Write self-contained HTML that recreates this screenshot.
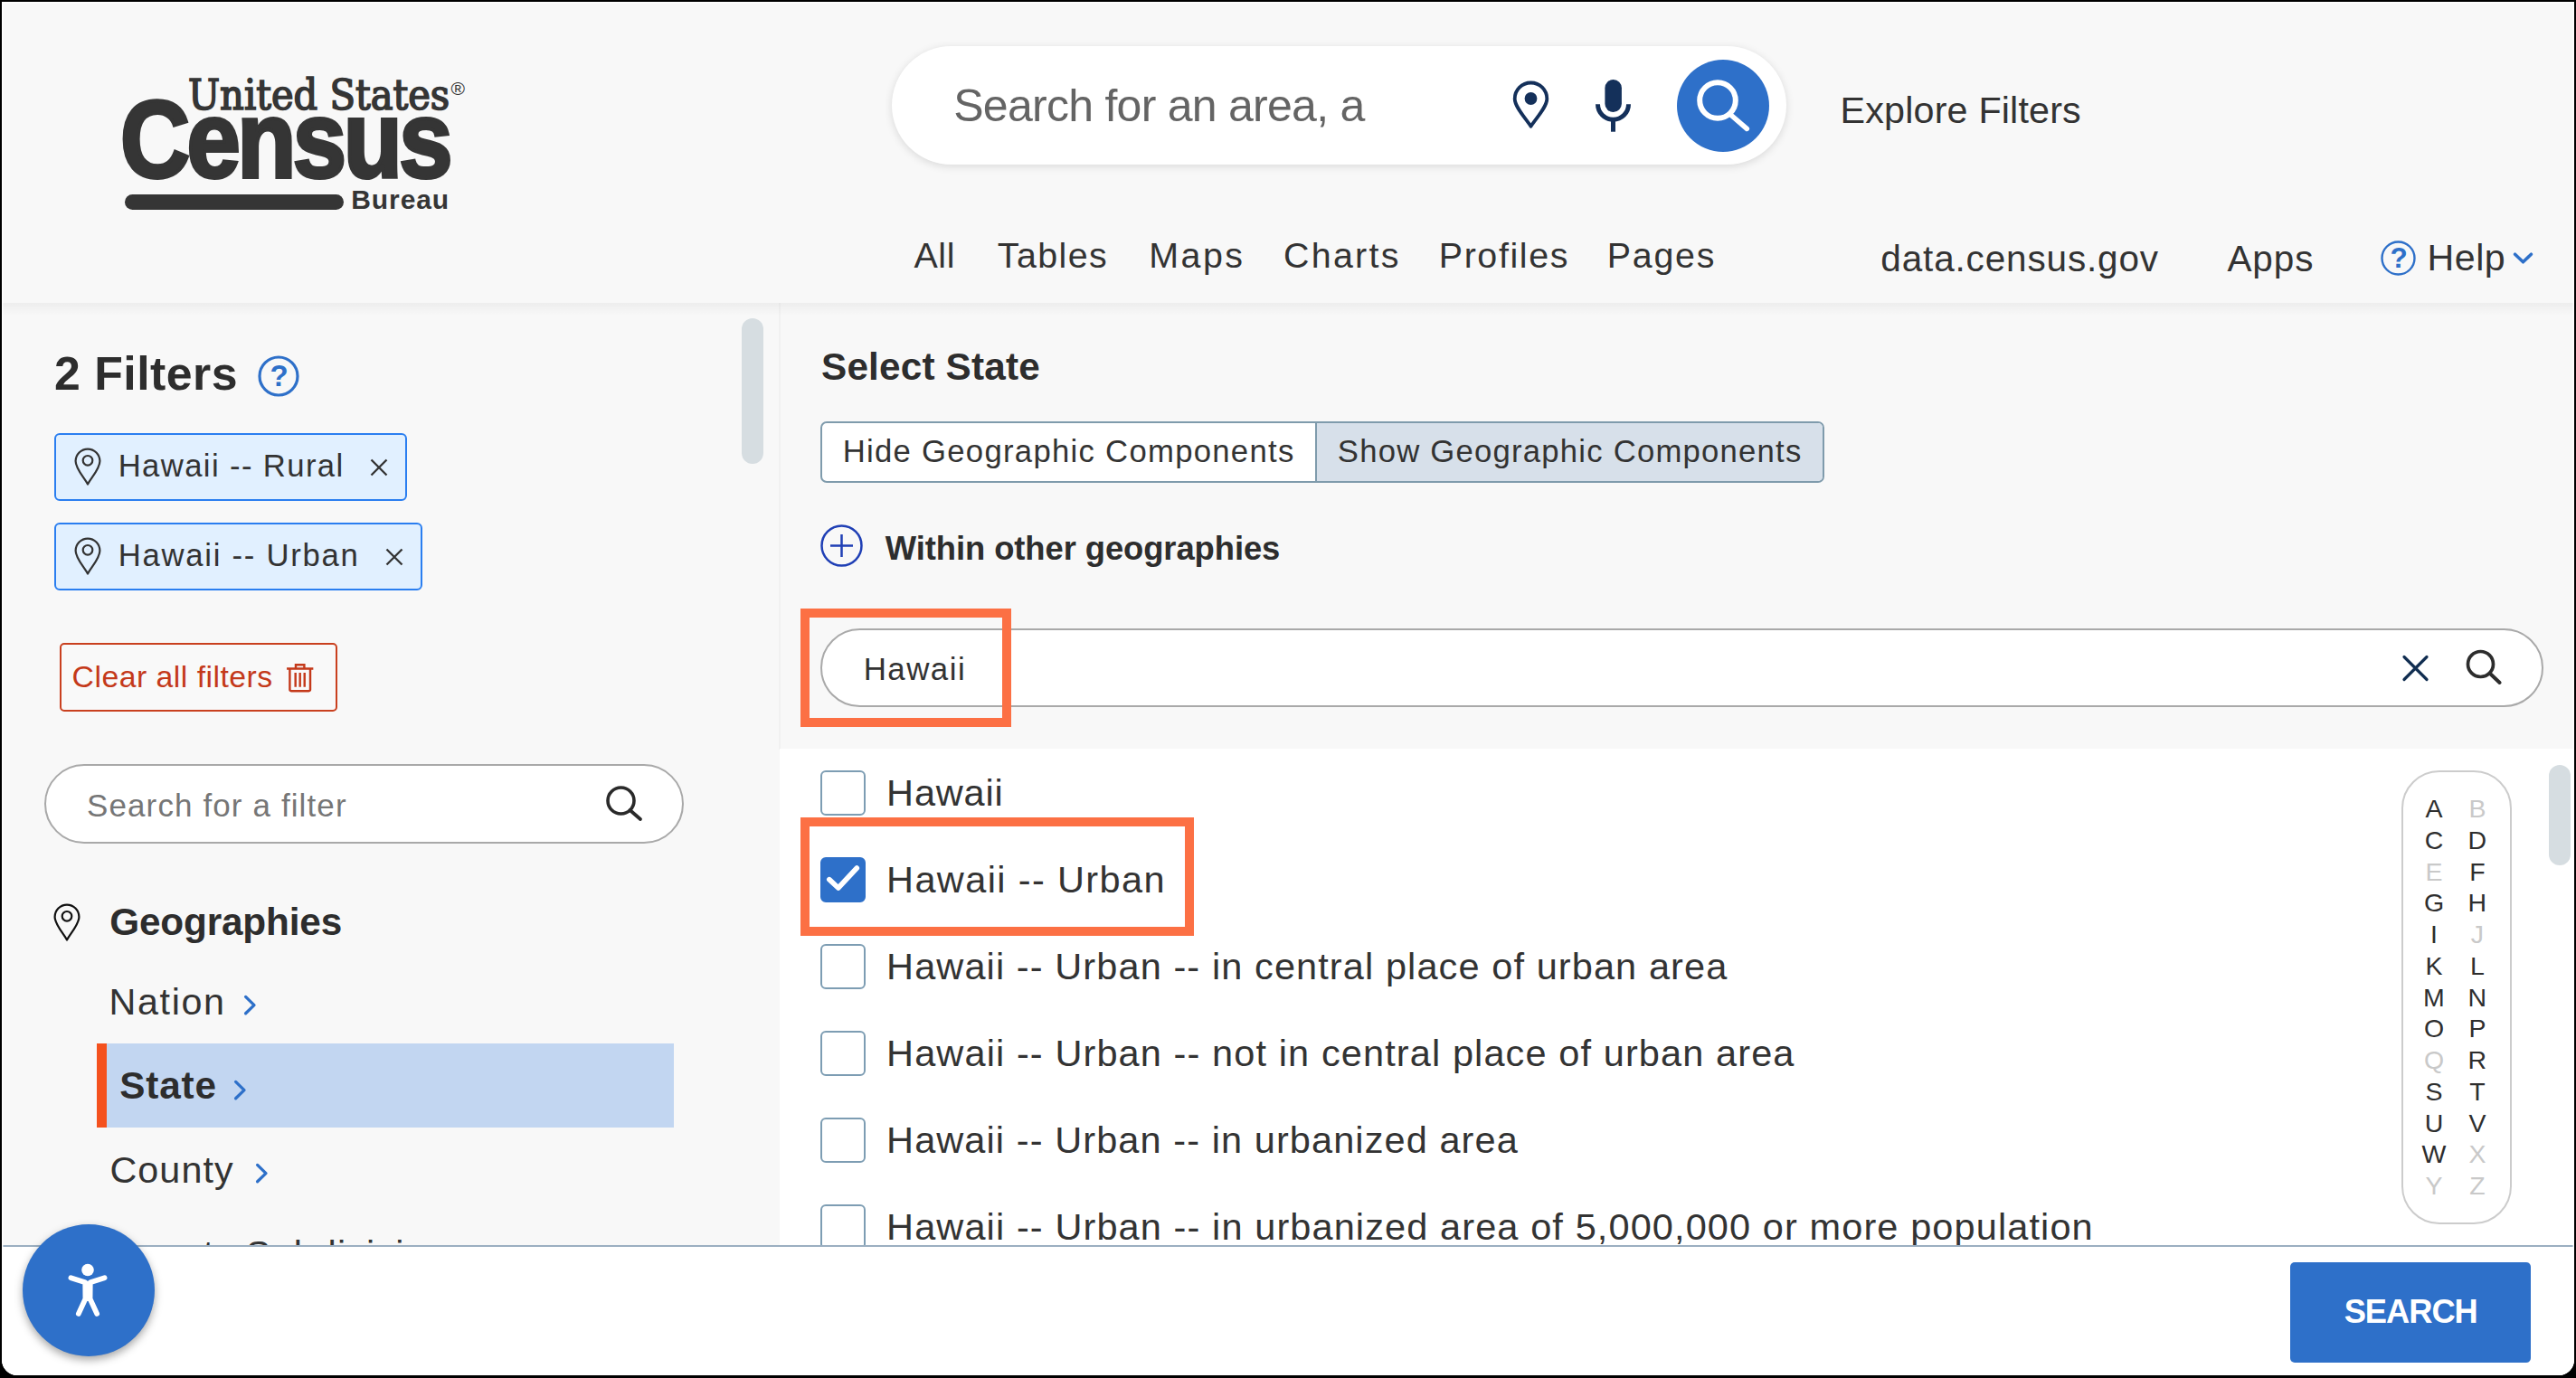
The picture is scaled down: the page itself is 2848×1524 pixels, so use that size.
<!DOCTYPE html>
<html lang="en">
<head>
<meta charset="utf-8">
<title>Explore Census Data - Select State</title>
<style>
*{box-sizing:border-box;margin:0;padding:0}
html,body{width:2848px;height:1524px;overflow:hidden;background:#000}
body{font-family:"Liberation Sans",sans-serif;color:#333;position:relative}
#win{position:absolute;left:2px;top:2px;width:2844px;height:1519px;overflow:hidden;border-radius:0 0 17px 17px;background:#f8f8f8}
#c{position:absolute;left:-2px;top:-2px;width:2848px;height:1524px}
.a{position:absolute;display:block}
.t{position:absolute;display:block;white-space:nowrap}
svg{position:absolute;display:block;overflow:visible}
.cb{position:absolute;width:49.5px;height:49.8px;border:2px solid #7d9db3;border-radius:6px;background:#fff}
.az span{position:absolute;display:block;width:40px;text-align:center;font-size:28.5px;line-height:30px;color:#2e2e2e}
.az span.d{color:#c9c9c9}
</style>
</head>
<body>
<div id="win">
<div id="c">
<!-- page regions -->
<div class="a" style="left:0;top:0;width:2848px;height:335px;background:#f8f8f8"></div>
<div class="a" style="left:0;top:335px;width:861px;height:1045px;background:#f8f8f8"></div>
<div class="a" style="left:861px;top:335px;width:1987px;height:494px;background:#f8f8f8;border-left:2px solid #f1f1f1"></div>
<div class="a" style="left:862px;top:828px;width:1986px;height:552px;background:#fff"></div>
<div class="a" style="left:0;top:335px;width:2848px;height:14px;background:linear-gradient(rgba(0,0,0,.045),rgba(0,0,0,0))"></div>
<!-- logo -->
<header>
<span class="t" id="lg-us" style="left:208px;top:75.3px;font-family:'DejaVu Serif Condensed','DejaVu Serif','Liberation Serif',serif;font-size:46.5px;line-height:60px;color:#353535;transform-origin:0 0;transform:scaleX(.995);-webkit-text-stroke:1.6px #353535">United States</span>
<span class="t" id="lg-r" style="left:498.5px;top:84.5px;font-size:21px;line-height:26px;color:#353535">®</span>
<span class="t" id="lg-c" style="left:133px;top:83.5px;font-weight:700;font-size:120px;line-height:140px;color:#353535;transform-origin:0 0;transform:scaleX(.889);-webkit-text-stroke:4px #353535;letter-spacing:-4px">Census</span>
<div class="a" style="left:137.5px;top:215px;width:242px;height:17.4px;border-radius:9px;background:#353535"></div>
<span class="t" id="lg-b" style="left:388.3px;top:204px;font-weight:700;font-size:30px;line-height:34px;color:#353535;letter-spacing:.9px">Bureau</span>
<!-- main search -->
<div class="a" style="left:986px;top:51px;width:989px;height:131px;border-radius:66px;background:#fff;box-shadow:0 2px 10px rgba(0,0,0,.13)"></div>
<span class="t" style="left:1054.25px;top:91.58px;font-size:50.00px;line-height:50.00px;letter-spacing:-0.735px;color:#646464;">Search for an area, a</span>
<svg style="left:1668px;top:86px" width="50" height="60" viewBox="0 0 50 60"><path d="M24.5 53.8 C19 45 6.7 32.5 6.7 23.3 A17.8 17.8 0 0 1 42.3 23.3 C42.3 32.5 30 45 24.5 53.8 Z" fill="none" stroke="#14305a" stroke-width="3.8" stroke-linejoin="round"/><circle cx="24.5" cy="23" r="6.9" fill="#14305a"/></svg>
<svg style="left:1760px;top:84px" width="50" height="66" viewBox="0 0 50 66"><rect x="14.4" y="4" width="18.5" height="36" rx="9.25" fill="#14305a"/><path d="M6.5 31.3 A17 17 0 0 0 40.5 31.3" fill="none" stroke="#14305a" stroke-width="5"/><rect x="21" y="48" width="5" height="13.7" fill="#14305a"/></svg>
<div class="a" style="left:1854px;top:66px;width:102px;height:102px;border-radius:51px;background:#2e70c9"></div>
<svg style="left:1854px;top:66px" width="102" height="102" viewBox="0 0 102 102"><circle cx="45" cy="45" r="19.8" fill="none" stroke="#fff" stroke-width="6"/><path d="M59.5 61 L77.3 76.4" stroke="#fff" stroke-width="5.6" stroke-linecap="round"/></svg>
<span class="t" style="left:2034.61px;top:101.64px;font-size:41.30px;line-height:41.30px;letter-spacing:0.159px;color:#333;">Explore Filters</span>
<nav>
<span class="t" style="left:1010.52px;top:263.25px;font-size:39.40px;line-height:39.40px;letter-spacing:0.553px;color:#333;">All</span>
<span class="t" style="left:1102.83px;top:263.25px;font-size:39.40px;line-height:39.40px;letter-spacing:1.416px;color:#333;">Tables</span>
<span class="t" style="left:1270.37px;top:263.25px;font-size:39.40px;line-height:39.40px;letter-spacing:2.439px;color:#333;">Maps</span>
<span class="t" style="left:1419.03px;top:263.25px;font-size:39.40px;line-height:39.40px;letter-spacing:2.271px;color:#333;">Charts</span>
<span class="t" style="left:1590.77px;top:263.25px;font-size:39.40px;line-height:39.40px;letter-spacing:1.607px;color:#333;">Profiles</span>
<span class="t" style="left:1776.77px;top:263.25px;font-size:39.40px;line-height:39.40px;letter-spacing:1.738px;color:#333;">Pages</span>
<span class="t" style="left:2079.30px;top:265.72px;font-size:40.50px;line-height:40.50px;letter-spacing:0.847px;color:#333;">data.census.gov</span>
<span class="t" style="left:2462.42px;top:265.72px;font-size:40.50px;line-height:40.50px;letter-spacing:0.913px;color:#333;">Apps</span>
<svg style="left:2631px;top:265px" width="42" height="42" viewBox="0 0 42 42"><circle cx="20.5" cy="20.5" r="18" fill="none" stroke="#2e70c9" stroke-width="2.4"/></svg>
<span class="t" style="left:2642.58px;top:270.14px;font-size:31.50px;line-height:31.50px;letter-spacing:0.000px;color:#2e70c9;font-weight:700;">?</span>
<span class="t" style="left:2683.62px;top:265.12px;font-size:41.20px;line-height:41.20px;letter-spacing:0.440px;color:#333;">Help</span>
<svg style="left:2777px;top:276.6px" width="26" height="18" viewBox="0 0 26 18"><path d="M3.6 4.2 L12.5 12.8 L21.4 4.2" fill="none" stroke="#2e70c9" stroke-width="3.5" stroke-linecap="round" stroke-linejoin="round"/></svg>
</nav>
</header>
<!-- filter sidebar -->
<aside>
<span class="t" style="left:59.94px;top:388.25px;font-size:51.80px;line-height:51.80px;letter-spacing:0.498px;color:#2d2d2d;font-weight:700;">2 Filters</span>
<svg style="left:283px;top:392px" width="50" height="50" viewBox="0 0 50 50"><circle cx="25" cy="24" r="21" fill="none" stroke="#2e70c9" stroke-width="3.2"/></svg>
<span class="t" style="left:298.51px;top:399.37px;font-size:33.00px;line-height:33.00px;letter-spacing:0.000px;color:#2e70c9;font-weight:700;">?</span>
<div class="a" style="left:820px;top:352px;width:24px;height:161px;border-radius:12px;background:#d6dde1"></div>
<div class="a" style="left:60px;top:479px;width:390px;height:74.5px;border:2px solid #2a7ef0;border-radius:6px;background:#e1f0ff"></div>
<svg style="left:82px;top:495px" width="30" height="42" viewBox="0 0 30 42"><path d="M15 40.5 C11 33 1.6 23.5 1.6 15 A13.4 13.4 0 0 1 28.4 15 C28.4 23.5 19 33 15 40.5 Z" fill="none" stroke="#333" stroke-width="2.2" stroke-linejoin="round"/><circle cx="15" cy="14.3" r="5.3" fill="none" stroke="#333" stroke-width="2.2"/></svg>
<span class="t" style="left:130.65px;top:498.43px;font-size:34.70px;line-height:34.70px;letter-spacing:1.371px;color:#333;">Hawaii -- Rural</span>
<svg style="left:409px;top:507px" width="20" height="20" viewBox="0 0 20 20"><path d="M1.5 1.5 L18.5 18.5 M18.5 1.5 L1.5 18.5" stroke="#333" stroke-width="2.3" fill="none"/></svg>
<div class="a" style="left:60px;top:578px;width:406.5px;height:74.5px;border:2px solid #2a7ef0;border-radius:6px;background:#e1f0ff"></div>
<svg style="left:82px;top:594px" width="30" height="42" viewBox="0 0 30 42"><path d="M15 40.5 C11 33 1.6 23.5 1.6 15 A13.4 13.4 0 0 1 28.4 15 C28.4 23.5 19 33 15 40.5 Z" fill="none" stroke="#333" stroke-width="2.2" stroke-linejoin="round"/><circle cx="15" cy="14.3" r="5.3" fill="none" stroke="#333" stroke-width="2.2"/></svg>
<span class="t" style="left:130.65px;top:597.23px;font-size:34.70px;line-height:34.70px;letter-spacing:1.731px;color:#333;">Hawaii -- Urban</span>
<svg style="left:426px;top:606px" width="20" height="20" viewBox="0 0 20 20"><path d="M1.5 1.5 L18.5 18.5 M18.5 1.5 L1.5 18.5" stroke="#333" stroke-width="2.3" fill="none"/></svg>
<div class="a" style="left:66px;top:711px;width:307px;height:76px;border:2px solid #c9401f;border-radius:5px;background:#f9f9f9"></div>
<span class="t" style="left:79.61px;top:732.39px;font-size:33.80px;line-height:33.80px;letter-spacing:0.468px;color:#c4391a;">Clear all filters</span>
<svg style="left:315.6px;top:733px" width="31.4" height="33.5" viewBox="0 0 30 32"><path d="M1 6.2 H29 M10.5 5.5 V2.2 H19.5 V5.5 M4.2 6.5 V28.3 Q4.2 29.8 5.7 29.8 H24.3 Q25.8 29.8 25.8 28.3 V6.5 M10.2 10.5 V25.5 M15 10.5 V25.5 M19.8 10.5 V25.5" fill="none" stroke="#c4391a" stroke-width="2.3"/></svg>
<div class="a" style="left:48.7px;top:845px;width:707px;height:88px;border:2px solid #a9a9a9;border-radius:44px;background:#fff"></div>
<span class="t" style="left:96.03px;top:873.70px;font-size:34.97px;line-height:34.97px;letter-spacing:1.128px;color:#767676;">Search for a filter</span>
<svg style="left:668px;top:866.7px" width="46" height="44" viewBox="0 0 46 44"><circle cx="18.5" cy="18.5" r="14.5" fill="none" stroke="#2a2a2a" stroke-width="3.6"/><path d="M28.5 29 L40 39" stroke="#2a2a2a" stroke-width="3.8" stroke-linecap="round"/></svg>
<svg style="left:59px;top:999px" width="30" height="42" viewBox="0 0 30 42"><path d="M15 40.5 C11 33 1.6 23.5 1.6 15 A13.4 13.4 0 0 1 28.4 15 C28.4 23.5 19 33 15 40.5 Z" fill="none" stroke="#111" stroke-width="2.2" stroke-linejoin="round"/><circle cx="15" cy="14.3" r="5.3" fill="none" stroke="#111" stroke-width="2.2"/></svg>
<span class="t" style="left:121.27px;top:999.39px;font-size:42.30px;line-height:42.30px;letter-spacing:-0.165px;color:#2d2d2d;font-weight:700;">Geographies</span>
<span class="t" style="left:120.61px;top:1088.44px;font-size:41.30px;line-height:41.30px;letter-spacing:1.595px;color:#333;">Nation</span>
<svg style="left:269px;top:1100px" width="16" height="23" viewBox="0 0 16 23"><path d="M2.6 2.4 L12 11.6 L2.6 20.8" fill="none" stroke="#2e70c9" stroke-width="3.3" stroke-linecap="round" stroke-linejoin="round"/></svg>
<div class="a" style="left:107px;top:1154px;width:638px;height:93px;background:#c2d6f1;border-left:11px solid #f4511e"></div>
<span class="t" style="left:132.32px;top:1180.19px;font-size:42.30px;line-height:42.30px;letter-spacing:0.800px;color:#2d2d2d;font-weight:700;">State</span>
<svg style="left:258px;top:1194px" width="16" height="23" viewBox="0 0 16 23"><path d="M2.6 2.4 L12 11.6 L2.6 20.8" fill="none" stroke="#2e70c9" stroke-width="3.3" stroke-linecap="round" stroke-linejoin="round"/></svg>
<span class="t" style="left:121.44px;top:1273.64px;font-size:41.30px;line-height:41.30px;letter-spacing:1.062px;color:#333;">County</span>
<svg style="left:282px;top:1286px" width="16" height="23" viewBox="0 0 16 23"><path d="M2.6 2.4 L12 11.6 L2.6 20.8" fill="none" stroke="#2e70c9" stroke-width="3.3" stroke-linecap="round" stroke-linejoin="round"/></svg>
<span class="t" style="left:121.44px;top:1366.54px;font-size:41.30px;line-height:41.30px;letter-spacing:1.158px;color:#333;">County Subdivision</span>
</aside>
<!-- select state panel -->
<main>
<span class="t" style="left:908.02px;top:384.89px;font-size:42.30px;line-height:42.30px;letter-spacing:0.175px;color:#2d2d2d;font-weight:700;">Select State</span>
<div class="a" style="left:907px;top:465.7px;width:1110px;height:68px;border:2px solid #7f9bac;border-radius:7px;background:#fff;overflow:hidden"><div class="a" style="left:545px;top:-2px;width:563px;height:67px;background:#d7e0ea;border-left:2px solid #7f9bac"></div></div>
<span class="t" style="left:931.65px;top:482.13px;font-size:34.70px;line-height:34.70px;letter-spacing:1.280px;color:#333;">Hide Geographic Components</span>
<span class="t" style="left:1478.84px;top:482.13px;font-size:34.70px;line-height:34.70px;letter-spacing:1.215px;color:#333;">Show Geographic Components</span>
<svg style="left:906px;top:579px" width="50" height="50" viewBox="0 0 50 50"><circle cx="24.5" cy="24.5" r="22" fill="none" stroke="#1f3fb5" stroke-width="2.5"/><path d="M24.5 12 V37 M12 24.5 H37" stroke="#1f3fb5" stroke-width="2.5"/></svg>
<span class="t" style="left:978.76px;top:588.59px;font-size:36.40px;line-height:36.40px;letter-spacing:-0.079px;color:#2d2d2d;font-weight:700;">Within other geographies</span>
<div class="a" style="left:907px;top:695px;width:1904.5px;height:86.5px;border:2px solid #a9a9a9;border-radius:44px;background:#fff"></div>
<span class="t" style="left:954.64px;top:723.26px;font-size:34.90px;line-height:34.90px;letter-spacing:1.473px;color:#333;">Hawaii</span>
<svg style="left:2656px;top:725px" width="30" height="28" viewBox="0 0 30 28"><path d="M2 1.5 L27 26.5 M27 1.5 L2 26.5" stroke="#112e51" stroke-width="3.2" fill="none" stroke-linecap="round"/></svg>
<svg style="left:2725px;top:717px" width="44" height="44" viewBox="0 0 44 44"><circle cx="17.5" cy="17.5" r="14" fill="none" stroke="#2d2d2d" stroke-width="3.7"/><path d="M27.8 27.8 L38.6 38" stroke="#2d2d2d" stroke-width="4" stroke-linecap="round"/></svg>
<div class="a" style="left:885px;top:672.5px;width:233px;height:131px;border:10px solid #fc7044"></div>
<div class="cb" style="left:907.3px;top:852.4px"></div>
<span class="t" style="left:980.10px;top:856.17px;font-size:41.50px;line-height:41.50px;letter-spacing:0.828px;color:#333;">Hawaii</span>
<div class="cb" style="left:907.3px;top:948.4px;background:#2e70c9;border-color:#2e70c9"></div>
<svg style="left:907.3px;top:948.4px" width="50" height="49" viewBox="0 0 50 49"><path d="M9.8 24.6 L19.8 34 L40.3 12" fill="none" stroke="#fff" stroke-width="5.6" stroke-linecap="round" stroke-linejoin="round"/></svg>
<span class="t" style="left:980.10px;top:952.17px;font-size:41.50px;line-height:41.50px;letter-spacing:1.364px;color:#333;">Hawaii -- Urban</span>
<div class="cb" style="left:907.3px;top:1044.4px"></div>
<span class="t" style="left:980.10px;top:1048.17px;font-size:41.50px;line-height:41.50px;letter-spacing:1.097px;color:#333;">Hawaii -- Urban -- in central place of urban area</span>
<div class="cb" style="left:907.3px;top:1140.4px"></div>
<span class="t" style="left:980.10px;top:1144.17px;font-size:41.50px;line-height:41.50px;letter-spacing:1.108px;color:#333;">Hawaii -- Urban -- not in central place of urban area</span>
<div class="cb" style="left:907.3px;top:1236.4px"></div>
<span class="t" style="left:980.10px;top:1240.17px;font-size:41.50px;line-height:41.50px;letter-spacing:1.086px;color:#333;">Hawaii -- Urban -- in urbanized area</span>
<div class="cb" style="left:907.3px;top:1332.4px"></div>
<span class="t" style="left:980.10px;top:1336.17px;font-size:41.50px;line-height:41.50px;letter-spacing:1.105px;color:#333;">Hawaii -- Urban -- in urbanized area of 5,000,000 or more population</span>
<div class="a" style="left:885px;top:904px;width:435px;height:130.5px;border:10px solid #fc7044"></div>
<div class="a az" style="left:2654.8px;top:852px;width:122.2px;height:502px;border:2px solid #ccc;border-radius:42px;background:#fff">
<span class="" style="left:14.2px;top:25.1px">A</span>
<span class="d" style="left:62.1px;top:25.1px">B</span>
<span class="" style="left:14.2px;top:59.9px">C</span>
<span class="" style="left:62.1px;top:59.9px">D</span>
<span class="d" style="left:14.2px;top:94.6px">E</span>
<span class="" style="left:62.1px;top:94.6px">F</span>
<span class="" style="left:14.2px;top:129.4px">G</span>
<span class="" style="left:62.1px;top:129.4px">H</span>
<span class="" style="left:14.2px;top:164.1px">I</span>
<span class="d" style="left:62.1px;top:164.1px">J</span>
<span class="" style="left:14.2px;top:198.9px">K</span>
<span class="" style="left:62.1px;top:198.9px">L</span>
<span class="" style="left:14.2px;top:233.6px">M</span>
<span class="" style="left:62.1px;top:233.6px">N</span>
<span class="" style="left:14.2px;top:268.4px">O</span>
<span class="" style="left:62.1px;top:268.4px">P</span>
<span class="d" style="left:14.2px;top:303.1px">Q</span>
<span class="" style="left:62.1px;top:303.1px">R</span>
<span class="" style="left:14.2px;top:337.9px">S</span>
<span class="" style="left:62.1px;top:337.9px">T</span>
<span class="" style="left:14.2px;top:372.6px">U</span>
<span class="" style="left:62.1px;top:372.6px">V</span>
<span class="" style="left:14.2px;top:407.4px">W</span>
<span class="d" style="left:62.1px;top:407.4px">X</span>
<span class="d" style="left:14.2px;top:442.1px">Y</span>
<span class="d" style="left:62.1px;top:442.1px">Z</span>
</div>
<div class="a" style="left:2818px;top:846px;width:24px;height:111px;border-radius:12px;background:#d6dde1"></div>
</main>
<!-- footer bar -->
<footer>
<div class="a" style="left:0;top:1377px;width:2848px;height:147px;background:#fff;border-top:2px solid #9bafc1"></div>
<div class="a" style="left:2532px;top:1396px;width:266px;height:111px;border-radius:5px;background:#2e70c9"></div>
<span class="t" style="left:2591.68px;top:1432.87px;font-size:36.30px;line-height:36.30px;letter-spacing:-1.029px;color:#fff;font-weight:700;">SEARCH</span>
<div class="a" style="left:25px;top:1354px;width:146px;height:146px;border-radius:73px;background:#2e70c9;box-shadow:0 4px 10px rgba(0,0,0,.35)"></div>
<svg style="left:25px;top:1354px" width="146" height="146" viewBox="0 0 146 146"><circle cx="72" cy="50.5" r="6.8" fill="#fff"/><path d="M53.4 59.2 L69.2 64.2 L69.4 82.5 L61.8 99 M90.6 59.2 L74.8 64.2 L74.6 82.5 L82.2 99" fill="none" stroke="#fff" stroke-width="5.7" stroke-linecap="round" stroke-linejoin="round"/><path d="M69 63 H75 V85 H69 Z" fill="#fff"/></svg>
</footer>
<div class="a" style="left:2px;top:2px;width:2844px;height:1519px;border-radius:0 0 17px 17px;box-shadow:inset 0 0 0 1.4px #fff;pointer-events:none"></div>
</div>
</body>
</html>
